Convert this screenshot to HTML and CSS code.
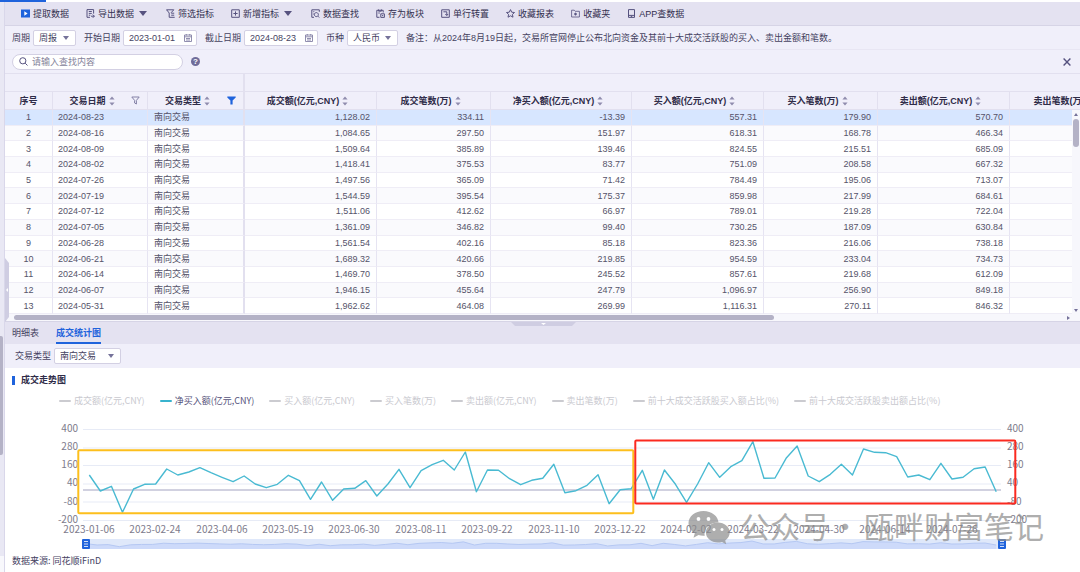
FILE: index.html
```html
<!DOCTYPE html>
<html lang="zh-CN">
<head>
<meta charset="utf-8">
<title>成交统计</title>
<link rel="stylesheet" href="styles.css">
</head>
<body>
<svg class="defs" width="0" height="0" aria-hidden="true">
  <symbol id="sort" viewBox="0 0 6 10"><path d="M3 0.5L5.6 3.6H.4zM3 9.5L5.6 6.4H.4z" fill="#8f8cad"/></symbol>
  <symbol id="funnel" viewBox="0 0 9 9"><path d="M.8 1h7.4L5.4 4.4V8L3.6 7V4.4z" fill="none" stroke="#8481a6" stroke-width="1"/></symbol>
  <symbol id="caret" viewBox="0 0 8 5"><path d="M0 0h8L4 5z" fill="#56527f"/></symbol>
  <symbol id="cal" viewBox="0 0 8 8"><path d="M.5 1h7v6.5h-7zM.5 2.8h7M2 4.5h4M2 6h4M2.3 0v1.5M5.7 0v1.5" fill="none" stroke="#8481a6" stroke-width=".9"/></symbol>
</svg>
<div class="tabstrip"><div class="tabstrip-active"></div></div>
<div class="app">
  <aside class="rail"><div class="rail-thumb"></div><div class="rail-foot"></div></aside>
  <main class="main">
    <button class="collapse-side" aria-label="收起侧栏"></button>
    <nav class="toolbar">
      <button class="tool"><svg viewBox="0 0 9 9"><path d="M0 .5h9v8H0z" fill="#1f63dc"/><path d="M3.3 2.2L6.6 4.5 3.3 6.8z" fill="#fff"/></svg>提取数据</button>
      <button class="tool"><svg viewBox="0 0 9 9"><path d="M4 8.3H1V.6h6.6v4M2.8 2.5h3M2.8 4.4h3M2.8 6.2h1.5M5 7.2h3.3M6.8 5.6L8.4 7.2 6.8 8.8"/></svg>导出数据<svg class="caret"><use href="#caret"/></svg></button>
      <button class="tool"><svg viewBox="0 0 9 9"><path d="M.3 .8h7.5L5 3.8M.8 1l2.4 3v4.3H8.7M5.2 4.2h3M5.2 6.2h3"/></svg>筛选指标</button>
      <button class="tool"><svg viewBox="0 0 9 9"><path d="M.7 .8h7.6v7.5H.7zM2.4 4.5h4.2M4.5 2.4v4.2"/></svg>新增指标<svg class="caret"><use href="#caret"/></svg></button>
      <button class="tool"><svg viewBox="0 0 9 9"><path d="M3 8.3H.8V.8h7.5v2M2.3 2.7h1M2.3 5h.8M8.2 8.5L6.8 7.1M5.4 3.6a2 2 0 1 1-.1 0z"/></svg>数据查找</button>
      <button class="tool"><svg viewBox="0 0 9 9"><path d="M3.5 8.3H.8V1.3h6.4v2.2M2.6 .4v1.8h2.8V.4M4.8 4.8h3.6v3.6H4.8zM6 6.6h1.2M2.3 4h1.5"/></svg>存为板块</button>
      <button class="tool"><svg viewBox="0 0 9 9"><path d="M.7 .8h7.6v7.5H.7zM2.4 2.8h3.4v3.6M4.3 5L5.8 6.5 7.1 5"/></svg>单行转置</button>
      <button class="tool"><svg viewBox="0 0 9 9"><path d="M4.5 .6l1.2 2.6 2.8.3-2.1 1.9.6 2.8-2.5-1.4L2 8.2l.6-2.8L.5 3.5l2.8-.3z"/></svg>收藏报表</button>
      <button class="tool"><svg viewBox="0 0 9 9"><path d="M.6 8V1.2h2.6l1 1.1h4.2V8zM4.5 3.6v3M3 5.1h3M3.5 4.1l2 2M5.5 4.1l-2 2" stroke-width=".8"/></svg>收藏夹</button>
      <button class="tool"><svg viewBox="0 0 9 9"><path d="M1.5 .6h6v7.8h-6zM1.5 6.4h6M3.8 7.4h1.4"/></svg>APP查数据</button>
    </nav>
    <form class="filters">
      <label for="period">周期</label>
      <select id="period" class="field period"><option>周报</option></select>
      <label for="from">开始日期</label>
      <span class="field date"><input id="from" type="text" value="2023-01-01"><svg><use href="#cal"/></svg></span>
      <label for="to">截止日期</label>
      <span class="field date"><input id="to" type="text" value="2024-08-23"><svg><use href="#cal"/></svg></span>
      <label for="currency">币种</label>
      <select id="currency" class="field currency"><option>人民币</option></select>
      <span>备注：从2024年8月19日起，交易所官网停止公布北向资金及其前十大成交活跃股的买入、卖出金额和笔数。</span>
    </form>
    <div class="search">
      <div class="searchbox"><svg viewBox="0 0 9 9"><path d="M6.2 6.2l2.3 2.3M6.9 3.8a3.1 3.1 0 1 1-6.2 0 3.1 3.1 0 0 1 6.2 0z" fill="none" stroke="#56527f"/></svg><input type="text" aria-label="查找内容" placeholder="请输入查找内容"></div>
      <button class="help" aria-label="帮助">?</button>
      <button class="close" aria-label="关闭"><svg viewBox="0 0 8 8"><path d="M.6 .6l6.8 6.8M7.4 .6L.6 7.4" stroke="#56527f" stroke-width="1.4"/></svg></button>
    </div>
    <div class="grid">
      <table>
        <colgroup><col class="c-no"><col class="c-date"><col class="c-type"><col class="c-amt"><col class="c-cnt"><col class="c-net"><col class="c-amt"><col class="c-cnt"><col class="c-amt"><col class="c-cnt"></colgroup>
        <thead>
          <tr class="group"><td colspan="3"></td><td colspan="7"></td></tr>
          <tr class="heads">
            <th>序号</th>
            <th><div class="th"><span>交易日期<svg class="sort"><use href="#sort"/></svg></span><svg class="funnel"><use href="#funnel"/></svg></div></th>
            <th><div class="th"><span>交易类型<svg class="sort"><use href="#sort"/></svg></span><svg class="funnel" viewBox="0 0 9 9"><path d="M.3 .5h8.4v1L5.6 4.6v4H3.4v-4L.3 1.5z" fill="#1f63dc"/></svg></div></th>
            <th>成交额(亿元,CNY)<svg class="sort"><use href="#sort"/></svg></th>
            <th>成交笔数(万)<svg class="sort"><use href="#sort"/></svg></th>
            <th>净买入额(亿元,CNY)<svg class="sort"><use href="#sort"/></svg></th>
            <th>买入额(亿元,CNY)<svg class="sort"><use href="#sort"/></svg></th>
            <th>买入笔数(万)<svg class="sort"><use href="#sort"/></svg></th>
            <th>卖出额(亿元,CNY)<svg class="sort"><use href="#sort"/></svg></th>
            <th>卖出笔数(万)<svg class="sort"><use href="#sort"/></svg></th>
          </tr>
        </thead>
        <tbody>
          <tr class="selected"><td>1</td><td>2024-08-23</td><td>南向交易</td><td>1,128.02</td><td>334.11</td><td>-13.39</td><td>557.31</td><td>179.90</td><td>570.70</td><td></td></tr>
          <tr><td>2</td><td>2024-08-16</td><td>南向交易</td><td>1,084.65</td><td>297.50</td><td>151.97</td><td>618.31</td><td>168.78</td><td>466.34</td><td></td></tr>
          <tr><td>3</td><td>2024-08-09</td><td>南向交易</td><td>1,509.64</td><td>385.89</td><td>139.46</td><td>824.55</td><td>215.51</td><td>685.09</td><td></td></tr>
          <tr><td>4</td><td>2024-08-02</td><td>南向交易</td><td>1,418.41</td><td>375.53</td><td>83.77</td><td>751.09</td><td>208.58</td><td>667.32</td><td></td></tr>
          <tr><td>5</td><td>2024-07-26</td><td>南向交易</td><td>1,497.56</td><td>365.09</td><td>71.42</td><td>784.49</td><td>195.06</td><td>713.07</td><td></td></tr>
          <tr><td>6</td><td>2024-07-19</td><td>南向交易</td><td>1,544.59</td><td>395.54</td><td>175.37</td><td>859.98</td><td>217.99</td><td>684.61</td><td></td></tr>
          <tr><td>7</td><td>2024-07-12</td><td>南向交易</td><td>1,511.06</td><td>412.62</td><td>66.97</td><td>789.01</td><td>219.28</td><td>722.04</td><td></td></tr>
          <tr><td>8</td><td>2024-07-05</td><td>南向交易</td><td>1,361.09</td><td>346.82</td><td>99.40</td><td>730.25</td><td>187.09</td><td>630.84</td><td></td></tr>
          <tr><td>9</td><td>2024-06-28</td><td>南向交易</td><td>1,561.54</td><td>402.16</td><td>85.18</td><td>823.36</td><td>216.06</td><td>738.18</td><td></td></tr>
          <tr><td>10</td><td>2024-06-21</td><td>南向交易</td><td>1,689.32</td><td>420.66</td><td>219.85</td><td>954.59</td><td>233.04</td><td>734.73</td><td></td></tr>
          <tr><td>11</td><td>2024-06-14</td><td>南向交易</td><td>1,469.70</td><td>378.50</td><td>245.52</td><td>857.61</td><td>219.68</td><td>612.09</td><td></td></tr>
          <tr><td>12</td><td>2024-06-07</td><td>南向交易</td><td>1,946.15</td><td>455.64</td><td>247.79</td><td>1,096.97</td><td>256.90</td><td>849.18</td><td></td></tr>
          <tr><td>13</td><td>2024-05-31</td><td>南向交易</td><td>1,962.62</td><td>464.08</td><td>269.99</td><td>1,116.31</td><td>270.11</td><td>846.32</td><td></td></tr>
        </tbody>
      </table>
      <div class="vscroll"><i class="up"></i><b></b><i class="down"></i></div>
    </div>
    <div class="hscroll"><b></b><i></i></div>
    <div class="tabs">
      <button class="tab">明细表</button>
      <button class="tab active">成交统计图</button>
      <svg class="collapse-down" viewBox="0 0 65 4"><path d="M0 0h65l-4 4H4z" fill="#cfcde2"/><path d="M30 1h5l-2.5 2z" fill="#fff"/></svg>
    </div>
    <div class="subfilter">
      <label for="kind">交易类型</label>
      <select id="kind" class="field kind"><option>南向交易</option></select>
    </div>
    <section class="chart">
      <h2>成交走势图</h2>
      <ul class="legend">
        <li>成交额(亿元,CNY)</li><li class="on">净买入额(亿元,CNY)</li><li>买入额(亿元,CNY)</li><li>买入笔数(万)</li><li>卖出额(亿元,CNY)</li><li>卖出笔数(万)</li><li>前十大成交活跃股买入额占比(%)</li><li>前十大成交活跃股卖出额占比(%)</li>
      </ul>
      <svg class="plot" viewBox="5 408 1075 144" role="img" aria-label="净买入额走势">
        <path class="gridline" d="M83 429.5H1001M83 448H1001M83 465.5H1001M83 484H1001M83 502H1001M83 520.5H1001"/>
        <path d="M83 490H1001" stroke="#c2c2d6" stroke-width="1.4"/>
        <g class="axis end"><text x="78" y="432">400</text><text x="78" y="450">280</text><text x="78" y="468">160</text><text x="78" y="486">40</text><text x="78" y="505">-80</text><text x="78" y="523">-200</text></g>
        <g class="axis"><text x="1007" y="432">400</text><text x="1007" y="450">280</text><text x="1007" y="468">160</text><text x="1007" y="486">40</text><text x="1007" y="505">-80</text><text x="1007" y="523">-200</text></g>
        <path d="M86 539H1002V549H86z" fill="#dfe8fa"/>
        <g transform="translate(86 505.7) scale(11.1 .08)"><polygon fill="#cddafa" points="0,475 1,491 2,486.3 3,512.3 4,489 5,484.3 6,484 7,469 8,475 9,472 10,467.7 11,472.7 12,477.3 13,481.7 14,476 15,484 16,487.7 17,484.3 18,475.3 19,480.7 20,499.3 21,482 22,500.3 23,489 24,488.3 25,480.7 26,496 27,484 28,469.3 29,487.7 30,470.7 31,464.7 32,460.3 33,470 34,452 35,491.7 36,470 37,470.3 38,478.7 39,484.7 40,480.3 41,478.3 42,464.3 43,492.7 44,490.7 45,485.3 46,474.7 47,503.7 48,489.7 49,488.7 50,470.3 51,499.3 52,470 53,484.3 54,502.3 55,484 56,462.7 57,477.3 58,466.7 59,460.7 60,441.7 61,478.3 62,478 63,458.3 64,446 65,476 66,481.7 67,474.3 68,464.3 69,475 70,449 71,452.3 72,452.7 73,456.7 74,477 75,475 76,479.7 77,463.3 78,479 79,477.3 80,468.7 81,467 82,491.7 82,541 0,541"/><use href="#net" stroke="#b5c8f3"/></g>
        <g transform="translate(89.3 0) scale(11.06 1)" stroke="#49bad2" stroke-width="1.4"><polyline id="net" class="series" points="0,475 1,491 2,486.3 3,512.3 4,489 5,484.3 6,484 7,469 8,475 9,472 10,467.7 11,472.7 12,477.3 13,481.7 14,476 15,484 16,487.7 17,484.3 18,475.3 19,480.7 20,499.3 21,482 22,500.3 23,489 24,488.3 25,480.7 26,496 27,484 28,469.3 29,487.7 30,470.7 31,464.7 32,460.3 33,470 34,452 35,491.7 36,470 37,470.3 38,478.7 39,484.7 40,480.3 41,478.3 42,464.3 43,492.7 44,490.7 45,485.3 46,474.7 47,503.7 48,489.7 49,488.7 50,470.3 51,499.3 52,470 53,484.3 54,502.3 55,484 56,462.7 57,477.3 58,466.7 59,460.7 60,441.7 61,478.3 62,478 63,458.3 64,446 65,476 66,481.7 67,474.3 68,464.3 69,475 70,449 71,452.3 72,452.7 73,456.7 74,477 75,475 76,479.7 77,463.3 78,479 79,477.3 80,468.7 81,467 82,491.7"/></g>
        <g id="grip"><rect x="82" y="539" width="8" height="10" rx="1" fill="#1f63dc"/><path d="M84 541.5h4M84 544h4M84 546.5h4" stroke="#fff" stroke-width=".8"/></g>
        <use href="#grip" x="916"/>
        <rect x="78.3" y="450.3" width="555" height="63" rx="1" fill="none" stroke="#fdbf1c" stroke-width="2"/>
        <rect x="635.3" y="440.5" width="380" height="63" rx="1" fill="none" stroke="#fb2a20" stroke-width="2"/>
        <g class="axis mid"><text x="89" y="533">2023-01-06</text><text x="155" y="533">2023-02-24</text><text x="222" y="533">2023-04-06</text><text x="288" y="533">2023-05-19</text><text x="354" y="533">2023-06-30</text><text x="421" y="533">2023-08-11</text><text x="487" y="533">2023-09-22</text><text x="554" y="533">2023-11-10</text><text x="620" y="533">2023-12-22</text><text x="686" y="533">2024-02-02</text><text x="753" y="533">2024-03-22</text><text x="819" y="533">2024-04-30</text><text x="885" y="533">2024-06-14</text><text x="952" y="533">2024-07-26</text></g>
        <g class="mark">
          <path d="M703.5 511c8.3 0 14.6 5.2 15 11.5-7.5-.2-14 4.6-14 11 0 .9.1 1.5.3 2.2-2.2.2-4.3 0-6.3-.6l-5 2.7 1.3-4.5c-4-2.4-6.3-6-6.3-10 0-7 6.7-12.3 15-12.3z"/>
          <path d="M717.8 522.5c6.600 0 11.9 4.5 11.9 10 0 3.2-1.7 6-4.5 7.9l1 3.8-4.2-2.3c-1.3.4-2.7.6-4.2.6-6.6 0-11.9-4.5-11.9-10s5.3-10 11.9-10z"/>
          <g fill="#fff"><circle cx="698.5" cy="519" r="1.9"/><circle cx="708.5" cy="519" r="1.9"/><circle cx="714" cy="529.5" r="1.5"/><circle cx="722" cy="529.5" r="1.5"/></g>
          <text x="740" y="538">公众号</text><text x="830" y="538">·</text><text x="864" y="538">瓯畔财富笔记</text>
        </g>
      </svg>
      <p class="source">数据来源: 同花顺iFinD</p>
    </section>
  </main>
</div>
</body>
</html>
```

FILE: styles.css
```css
* { box-sizing: border-box; }
body {
  margin: 0;
  min-height: 100vh;
  display: flex;
  flex-direction: column;
  overflow: hidden;
  background: #fff;
  color: #45425f;
  font: 9px/14px "Liberation Sans", "Noto Sans CJK SC", sans-serif;
}
button, input, select { font: inherit; color: inherit; margin: 0; padding: 0; border: 0; background: none; outline: 0; }
svg { flex: none; }
.defs { position: absolute; }

.tabstrip { height: 2px; }
.tabstrip-active { width: 46px; height: 2px; background: #1f63dc; }
.app { flex: 1; display: flex; }
.rail { display: flex; flex-direction: column; width: 5px; flex: none; background: #e9e8f4; border-right: 1px solid #d9d7ea; padding-top: 334px; }
.rail-thumb { width: 3px; height: 119px; background: #b4b2c6; border-radius: 0 2px 2px 0; }
.rail-foot { height: 16px; margin-top: auto; background: #f8f8fc; }
.main { flex: 1; min-width: 0; position: relative; }
.collapse-side {
  position: absolute; left: 0; top: 256px; width: 4px; height: 64px; z-index: 2;
  background: #cfcde2; clip-path: polygon(0 0, 100% 5px, 100% 59px, 0 100%);
}
.collapse-side::after { content: ""; display: block; margin-left: 1px; border: 2px solid transparent; border-right-color: #fff; border-left: 0; width: 0; }

.toolbar { display: flex; align-items: center; gap: 17px; height: 24px; padding-left: 16px; background: #e4e2f1; border-bottom: 1px solid #d6d4e6; }
.tool { display: flex; align-items: center; gap: 3px; white-space: nowrap; color: #33304f; }
.tool svg { width: 9px; height: 9px; fill: none; stroke: #56527f; stroke-width: 1; }
.tool svg:first-child path[fill] { stroke: none; }
.tool .caret { width: 8px; height: 5px; stroke: none; margin: 0 2px; }

.filters { display: flex; align-items: center; height: 24px; padding-left: 7px; background: #f0effa; border-bottom: 1px solid #e8e6f3; white-space: nowrap; }
.field { height: 16px; border: 1px solid #d3d0e3; border-radius: 2px; background: #fff; margin: 0 8px 0 3px; padding-left: 5px; }
select.field {
  appearance: none;
  background: #fff url("data:image/svg+xml,%3Csvg xmlns='http://www.w3.org/2000/svg' width='6' height='4'%3E%3Cpath d='M0 0h6L3 4z' fill='%2375729a'/%3E%3C/svg%3E") no-repeat right 6px center;
}
.period { width: 43px; }
.currency { width: 51px; }
.kind { width: 67px; }
.date { display: flex; align-items: center; justify-content: space-between; width: 74px; padding-right: 4px; }
.date input { width: 50px; }
.date svg { width: 8px; height: 8px; }

.search { display: flex; align-items: center; height: 24px; padding: 0 8px 0 7px; background: #f0effa; border-bottom: 1px solid #e2e0ef; }
.searchbox { display: flex; align-items: center; gap: 4px; width: 171px; height: 16px; padding-left: 6px; background: #fff; border: 1px solid #d3d0e3; border-radius: 8px; }
.searchbox svg { width: 9px; height: 9px; }
.searchbox input { flex: 1; min-width: 0; }
.searchbox input::placeholder { color: #85839a; opacity: 1; }
.help { width: 9px; height: 9px; margin-left: 8px; border-radius: 50%; background: #6f6c99; color: #fff; font-size: 8px; font-weight: bold; line-height: 9px; }
.close { margin-left: auto; width: 10px; height: 10px; display: grid; place-items: center; }
.close svg { width: 8px; height: 8px; }

.grid { position: relative; overflow: hidden; }
table { table-layout: fixed; width: 1119px; height: 240px; border-collapse: separate; border-spacing: 0; }
.c-no { width: 48px; } .c-date { width: 95px; } .c-type { width: 97px; }
.c-amt { width: 132px; } .c-cnt { width: 114px; } .c-net { width: 141px; }
td, th { padding: 0 6px 0 5px; border-right: 1px solid #e6e4f2; border-bottom: 1px solid #efedf6; line-height: 14px; white-space: nowrap; text-align: right; color: #55536a; }
thead td, thead th { background: #f0effa; border-color: #e2e0ef; }
.group { height: 18px; }
.heads { height: 18px; }
th { text-align: center; color: #2f2c48; font-weight: bold; padding: 0 6px 0 0; }
th:first-child { padding: 0; }
.th { display: flex; align-items: center; }
.th span { flex: 1; }
.sort { width: 6px; height: 10px; margin-left: 3px; vertical-align: middle; }
.funnel { width: 9px; height: 9px; margin-right: 1px; }
.group td:first-child, .heads th:nth-child(3), tbody td:nth-child(3) { border-right: 2px solid #e2e0ef; }
tbody td:first-child { text-align: center; padding: 0; }
tbody td:nth-child(2), tbody td:nth-child(3) { text-align: left; }
tbody td:nth-child(3) { padding-left: 6px; }
tbody tr:nth-child(even) { background: #fafafd; }
tbody tr.selected { background: #d7e6ff; }
.vscroll { position: absolute; right: 0; top: 36px; bottom: 0; width: 8px; background: #f7f7fc; display: flex; flex-direction: column; align-items: center; }
.vscroll b { width: 6px; height: 28px; margin-top: 3px; border-radius: 3px; background: #b4b2c6; }
.vscroll i { border: 2px solid transparent; width: 0; height: 0; }
.vscroll .up { margin-top: 3px; border-top: 0; border-bottom: 3px solid #75729a; }
.vscroll .down { margin-top: auto; margin-bottom: 2px; border-bottom: 0; border-top: 3px solid #75729a; }
.hscroll { display: flex; align-items: center; justify-content: space-between; height: 7px; padding: 0 10px 0 9px; background: #f7f7fc; }
.hscroll b { width: 72%; height: 5px; border-radius: 3px; background: #b4b2c6; }
.hscroll i { border: 2px solid transparent; border-left: 3px solid #75729a; border-right: 0; }

.tabs { position: relative; display: flex; gap: 17px; height: 23px; padding-left: 7px; background: #e4e2f1; border-top: 1px solid #d6d4e6; }
.tab { border-bottom: 2px solid transparent; padding-top: 2px; }
.tab.active { color: #1f63dc; font-weight: bold; border-color: #1f63dc; }
.collapse-down { position: absolute; left: 50%; top: 0; width: 65px; height: 4px; margin-left: -32px; }
.subfilter { display: flex; align-items: center; height: 24px; padding-left: 10px; background: #f0effa; }

h2 { margin: 0 0 0 7px; padding-left: 6px; border-left: 3px solid #1f63dc; font-size: 9px; line-height: 9px; color: #2f2c48; }
.chart { padding-top: 8px; }
.legend { list-style: none; display: flex; gap: 15px; margin: 9px 0 0; padding: 0 0 0 54px; font-family: "Noto Sans CJK SC", sans-serif; color: #c9c9cf; white-space: nowrap; }
.legend li { display: flex; align-items: center; gap: 3px; }
.legend li::before { content: ""; width: 12px; height: 2px; border-radius: 1px; background: #cbcbd0; }
.legend .on { color: #55527a; }
.legend .on::before { background: #38b3ce; }
.plot { display: block; width: 100%; height: auto; }
.gridline { stroke: #e7ebf6; stroke-width: 1; }
.series { fill: none; vector-effect: non-scaling-stroke; stroke-linejoin: round; }
.axis { font: 10px "Noto Sans CJK SC", sans-serif; fill: #7d7b8c; }
.end { text-anchor: end; }
.mid { text-anchor: middle; }
.mark { fill: #8c8c8c; opacity: .7; font: 30px "Noto Sans CJK SC", sans-serif; }
.source { margin: 2px 0 0 7px; font-family: "Noto Sans CJK SC", sans-serif; }
```
